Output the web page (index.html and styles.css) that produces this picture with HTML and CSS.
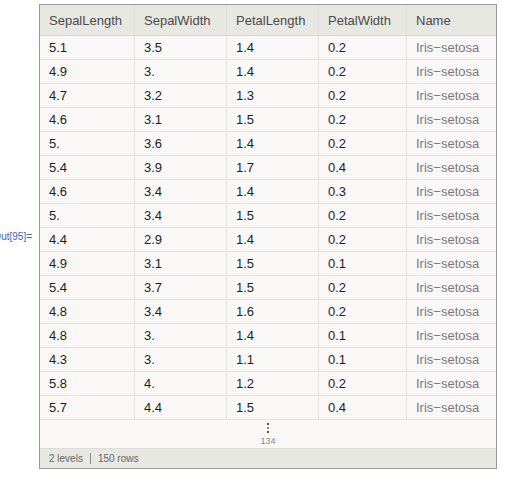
FILE: index.html
```html
<!DOCTYPE html>
<html>
<head>
<meta charset="utf-8">
<link rel="stylesheet" href="styles.css">
</head>
<body>
<div class="cell">
  <div class="label"><span>Out[95]=</span></div>
  <div class="frame">
    <table class="grid">
      <thead>
        <tr><th class="c1">SepalLength</th><th class="c2">SepalWidth</th><th class="c3">PetalLength</th><th class="c4">PetalWidth</th><th class="c5">Name</th></tr>
      </thead>
      <tbody>
        <tr><td>5.1</td><td>3.5</td><td>1.4</td><td>0.2</td><td class="nm">Iris−setosa</td></tr>
        <tr><td>4.9</td><td>3.</td><td>1.4</td><td>0.2</td><td class="nm">Iris−setosa</td></tr>
        <tr><td>4.7</td><td>3.2</td><td>1.3</td><td>0.2</td><td class="nm">Iris−setosa</td></tr>
        <tr><td>4.6</td><td>3.1</td><td>1.5</td><td>0.2</td><td class="nm">Iris−setosa</td></tr>
        <tr><td>5.</td><td>3.6</td><td>1.4</td><td>0.2</td><td class="nm">Iris−setosa</td></tr>
        <tr><td>5.4</td><td>3.9</td><td>1.7</td><td>0.4</td><td class="nm">Iris−setosa</td></tr>
        <tr><td>4.6</td><td>3.4</td><td>1.4</td><td>0.3</td><td class="nm">Iris−setosa</td></tr>
        <tr><td>5.</td><td>3.4</td><td>1.5</td><td>0.2</td><td class="nm">Iris−setosa</td></tr>
        <tr><td>4.4</td><td>2.9</td><td>1.4</td><td>0.2</td><td class="nm">Iris−setosa</td></tr>
        <tr><td>4.9</td><td>3.1</td><td>1.5</td><td>0.1</td><td class="nm">Iris−setosa</td></tr>
        <tr><td>5.4</td><td>3.7</td><td>1.5</td><td>0.2</td><td class="nm">Iris−setosa</td></tr>
        <tr><td>4.8</td><td>3.4</td><td>1.6</td><td>0.2</td><td class="nm">Iris−setosa</td></tr>
        <tr><td>4.8</td><td>3.</td><td>1.4</td><td>0.1</td><td class="nm">Iris−setosa</td></tr>
        <tr><td>4.3</td><td>3.</td><td>1.1</td><td>0.1</td><td class="nm">Iris−setosa</td></tr>
        <tr><td>5.8</td><td>4.</td><td>1.2</td><td>0.2</td><td class="nm">Iris−setosa</td></tr>
        <tr><td>5.7</td><td>4.4</td><td>1.5</td><td>0.4</td><td class="nm">Iris−setosa</td></tr>
      </tbody>
    </table>
    <div class="more">
      <div class="dots"><span></span><span></span><span></span></div>
      <div class="count">134</div>
    </div>
    <div class="footer"><span>2 levels</span><span class="sep"></span><span>150 rows</span></div>
  </div>
</div>
</body>
</html>
```
FILE: styles.css
```css
html, body {
  margin: 0;
  padding: 0;
  background: #ffffff;
}
body {
  font-family: "Liberation Sans", Arial, sans-serif;
}
.cell {
  display: flex;
  align-items: flex-start;
  padding-top: 4px;
}
.label {
  width: 39px;
  flex: none;
  box-sizing: border-box;
  margin-top: 227px;
  font-size: 10px;
  color: #4a64a8;
  display: flex;
  justify-content: flex-end;
  white-space: nowrap;
  padding-right: 7px;
  line-height: 12px;
}
.label span {
  flex: none;
}
.frame {
  width: 458px;
  flex: none;
  box-sizing: border-box;
  border: 1px solid #9a9a9a;
  background: #f9f8f6;
}
.grid {
  border-collapse: collapse;
  width: 100%;
  table-layout: fixed;
  font-size: 13px;
}
.grid th {
  background: #e8e8e3;
  color: #4a4a4a;
  font-weight: normal;
  text-align: left;
  height: 30px;
  padding: 0 0 0 9px;
  border-left: 1px solid #e0e0dc;
  border-bottom: 1px solid #d6d6d2;
  white-space: nowrap;
}
.grid th:first-child, .grid td:first-child {
  border-left: none;
}
.c1 { width: 85px; }
.c2 { width: 82px; }
.c3 { width: 82px; }
.c4 { width: 78px; }
.grid td {
  height: 23px;
  padding: 0 0 0 9px;
  color: #1e1e1e;
  border-left: 1px solid #e2e2df;
  border-bottom: 1px solid #e2e2df;
  white-space: nowrap;
}
.grid td.nm {
  color: #7a7a7a;
}
.more {
  height: 29px;
  display: flex;
  flex-direction: column;
  align-items: center;
  padding-top: 2px;
  box-sizing: border-box;
  border-bottom: 1px solid #dcdcd8;
}
.dots {
  display: flex;
  flex-direction: column;
  gap: 2px;
  padding-top: 1px;
}
.dots span {
  width: 2px;
  height: 2px;
  background: #7a4a20;
}
.dots span:nth-child(2) {
  background: #c0702a;
}
.count {
  font-size: 9px;
  color: #8a8a8a;
  line-height: 10px;
  margin-top: 3px;
}
.footer {
  height: 19px;
  background: #e8e8e3;
  display: flex;
  align-items: center;
  padding-left: 9px;
  font-size: 10px;
  color: #666;
  gap: 7px;
}
.sep {
  width: 1px;
  height: 11px;
  background: #888;
}
```
